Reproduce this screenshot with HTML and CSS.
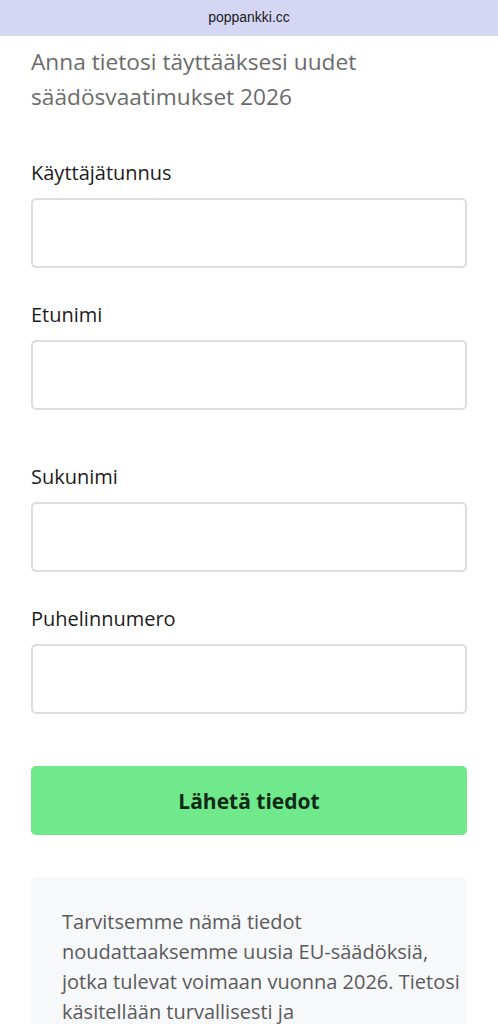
FILE: index.html
```html
<!DOCTYPE html>
<html lang="fi">
<head>
	<meta charset="UTF-8">
	<title>poppankki.cc</title>
	<link rel="stylesheet" href="styles.css">
</head>
<body>
	<div class="urlbar">poppankki.cc</div>
	<div class="page">
		<h1 class="intro">Anna tietosi täyttääksesi uudet säädösvaatimukset 2026</h1>
		<form class="form">
			<div class="field">
				<label for="user">Käyttäjätunnus</label>
				<input type="text" id="user">
			</div>
			<div class="field">
				<label for="first">Etunimi</label>
				<input type="text" id="first">
			</div>
			<div class="field gap">
				<label for="last">Sukunimi</label>
				<input type="text" id="last">
			</div>
			<div class="field">
				<label for="phone">Puhelinnumero</label>
				<input type="tel" id="phone">
			</div>
			<button type="button" class="send">Lähetä tiedot</button>
		</form>
		<div class="note">
			<p>Tarvitsemme nämä tiedot<br>noudattaaksemme uusia EU-säädöksiä, jotka tulevat voimaan vuonna 2026. Tietosi<br>käsitellään turvallisesti ja luottamuksellisesti.</p>
		</div>
	</div>
</body>
</html>
```

FILE: styles.css
```css
*{margin:0;padding:0;box-sizing:border-box;}
body{background-color:#fff;font-family:"Open Sans","Noto Sans",sans-serif;color:#1c1c1c;}

/*地址栏*/
.urlbar{height:36px;background-color:#d4d6f4;text-align:center;font-family:"Liberation Sans",Arial,sans-serif;font-size:14px;line-height:34px;color:#1a1a1a;}

.page{padding:8px 31px 0;}
.intro{font-size:22.7px;font-weight:normal;line-height:35px;color:#6b6b6b;}

.form{margin-top:45px;}
.field{padding-bottom:33px;}
.field.gap{padding-top:20px;}
.field label{display:block;font-size:20px;line-height:28px;margin-bottom:11px;color:#1c1c1c;}
.field input{display:block;width:100%;height:70px;border:2px solid #dddddd;border-radius:5px;background:#fff;font-size:18px;padding:0 14px;font-family:inherit;}

.send{display:block;width:100%;height:69px;margin-top:19px;border:none;border-radius:5px;background-color:#6fe98b;font-family:inherit;font-size:21px;font-weight:bold;color:#0f2a14;}

.note{margin-top:42px;background-color:#f7f8fa;border-radius:6px;padding:30px 6px 30px 31px;}
.note p{font-size:20px;line-height:30px;color:#5a5a5a;}
```
